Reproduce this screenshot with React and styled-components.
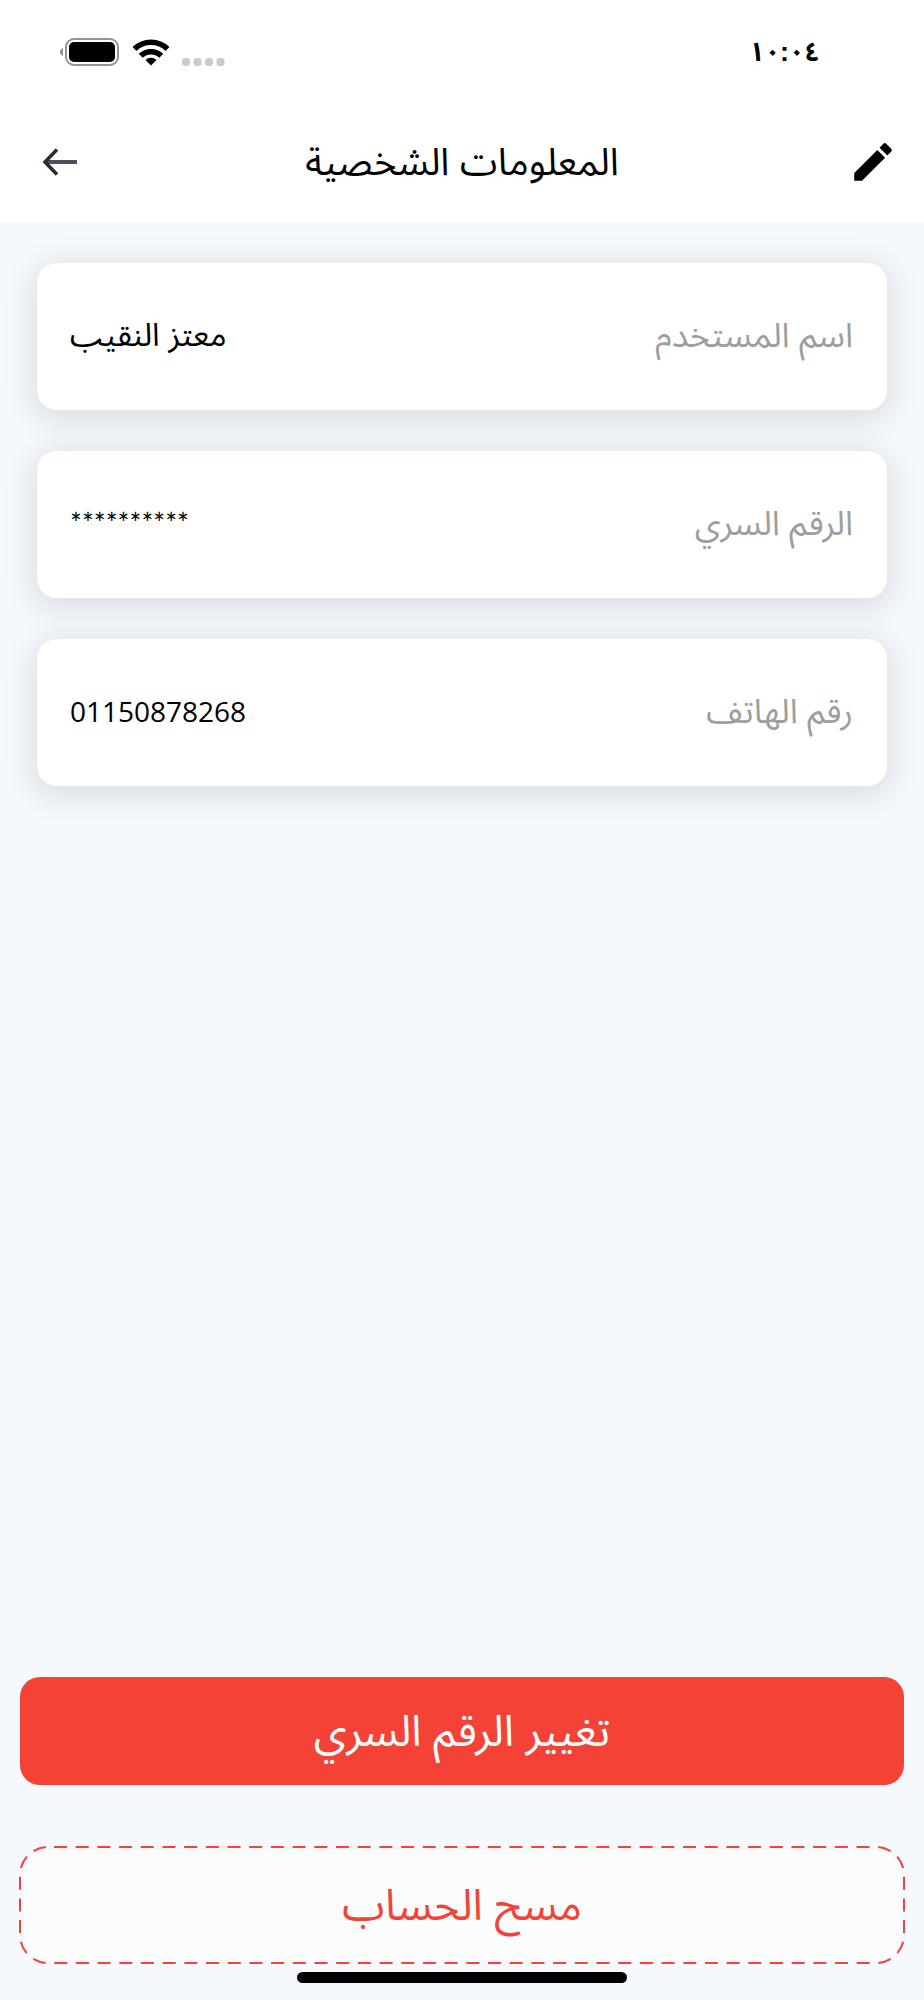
import React from 'react';
import styled, { createGlobalStyle } from 'styled-components';
import { MdEdit } from 'react-icons/md';

const GlobalStyle = createGlobalStyle`
  * {
    box-sizing: border-box;
  }
  body {
    margin: 0;
    background: #f5f8fd;
  }
`;

// start of styled components
const Screen = styled.div`
  display: flex;
  flex-direction: column;
  min-height: 100vh;
  background: #f5f8fd;
  color: #000;
  font-family: 'Liberation Sans', 'Noto Sans Arabic', 'DejaVu Sans', sans-serif;
`;

const Header = styled.header`
  background: #fff;
`;

const StatusBar = styled.div`
  display: flex;
  align-items: center;
  justify-content: space-between;
  height: 104px;
  padding: 0 104px 0 60px;
`;

const Time = styled.time`
  font-size: 27px;
  font-weight: 700;
  line-height: 40px;
`;

const StatusIcons = styled.div`
  display: flex;
  align-items: center;
  gap: 12px;
`;

const AppBar = styled.div`
  display: grid;
  grid-template-columns: 68px 1fr 68px;
  align-items: center;
  height: 118px;
  padding: 0 26px 2px;
`;

const Title = styled.h1`
  margin: 0;
  font-size: 38px;
  font-weight: 400;
  line-height: 48px;
  text-align: center;
`;

const IconButton = styled.button`
  display: flex;
  align-items: center;
  justify-content: ${props => props.$align || 'center'};
  height: 52px;
  padding: 0;
  border: 0;
  background: none;
  color: #000;
  cursor: pointer;
`;

const Main = styled.main`
  display: flex;
  flex: 1;
  flex-direction: column;
  justify-content: space-between;
  padding: 41px 20px 36px;
`;

const InfoList = styled.dl`
  display: flex;
  flex-direction: column;
  gap: 41px;
  margin: 0 17px;
`;

const InfoCard = styled.div`
  display: flex;
  align-items: center;
  justify-content: space-between;
  height: 147px;
  padding: 0 34px 4px 33px;
  border-radius: 20px;
  background: #fff;
  box-shadow: 0 6px 30px 6px rgba(0, 0, 0, 0.1);
`;

const Label = styled.dt`
  color: #9e9e9e;
  font-size: 34px;
  line-height: 40px;
`;

const Value = styled.dd`
  margin: 0;
  font-family: ${props => props.$font || 'inherit'};
  font-size: ${props => (props.$font ? '28px' : '32px')};
  line-height: 40px;
`;

const Actions = styled.div`
  display: flex;
  flex-direction: column;
  gap: 61px;
`;

const Button = styled.button`
  position: relative;
  height: ${props => (props.$outlined ? '118px' : '108px')};
  padding: 4px;
  border: 0;
  border-radius: ${props => (props.$outlined ? '28px' : '20px')};
  background: ${props => (props.$outlined ? '#fbfcfe content-box' : '#f44336')};
  color: ${props => (props.$outlined ? '#f44336' : '#fff')};
  font-family: inherit;
  font-size: 43px;
  line-height: 56px;
  cursor: pointer;
`;

const Dashes = styled.svg`
  position: absolute;
  inset: 0;
  width: 100%;
  height: 100%;
  overflow: visible;

  rect {
    y: 1px;
    width: 100%;
    height: calc(100% - 2px);
    fill: none;
    stroke: #f44336;
    stroke-width: 2;
    stroke-dasharray: 13.01 8.68;
    stroke-dashoffset: -6;
  }
`;

const HomeIndicator = styled.div`
  position: fixed;
  bottom: 17px;
  left: 50%;
  width: 330px;
  height: 11px;
  margin-left: -165px;
  border-radius: 6px;
  background: #000;
`;

// start of icons
const BatteryIcon = () => (
  <svg width="60" height="30" viewBox="0 0 60 30" aria-hidden="true">
    <path d="M3 11v8C1 18.200 0 16.800 0 15s1-3.200 3-4z" fill="#8e8e8e" />
    <rect x="6" y="2" width="52" height="26" rx="8" fill="none" stroke="#949494" strokeWidth="2" />
    <rect x="9" y="5" width="46" height="20" rx="5" />
  </svg>
);

const WifiIcon = () => (
  <svg width="38" height="30" viewBox="0 0 38 30" aria-hidden="true">
    <g fill="none" stroke="#000" strokeWidth="5.500">
      <path d="M2.500 12a23.500 23.500 0 0 1 33 0" />
      <path d="M8.700 18.800a14.800 14.800 0 0 1 20.600 0" />
    </g>
    <path d="M19 28.500l-5.500-5.500a8 8 0 0 1 11 0z" />
  </svg>
);

const SignalIcon = () => (
  <svg width="43" height="30" viewBox="0 0 43 30" fill="#cbcbcb" aria-hidden="true">
    <rect x="0" y="21" width="8" height="8" rx="3" />
    <rect x="11.500" y="21" width="8" height="8" rx="3" />
    <rect x="23" y="21" width="8" height="8" rx="3" />
    <rect x="34.500" y="21" width="8" height="8" rx="3" />
  </svg>
);

const BackIcon = () => (
  <svg width="36" height="28" viewBox="0 0 36 28" fill="none" aria-hidden="true">
    <path d="M5 14h30" stroke="#4d505b" strokeWidth="4" />
    <path d="M15 1.500L3 14l12 12.500" stroke="#252b37" strokeWidth="3.500" />
  </svg>
);

const fields = [
  { label: 'اسم المستخدم', value: 'معتز النقيب' },
  { label: 'الرقم السري', value: '**********', font: 'Lato, sans-serif' },
  { label: 'رقم الهاتف', value: '01150878268', font: "'Open Sans', sans-serif" },
];

const App = () => {
  return (
    <Screen dir="rtl" lang="ar">
      <GlobalStyle />
      <Header>
        <StatusBar>
          <Time>١٠:٠٤</Time>
          <StatusIcons>
            <SignalIcon />
            <WifiIcon />
            <BatteryIcon />
          </StatusIcons>
        </StatusBar>
        <AppBar>
          <IconButton type="button" aria-label="تعديل" $align="flex-start">
            <MdEdit size={50} />
          </IconButton>
          <Title>المعلومات الشخصية</Title>
          <IconButton type="button" aria-label="رجوع">
            <BackIcon />
          </IconButton>
        </AppBar>
      </Header>
      <Main>
        <InfoList>
          {fields.map(field => (
            <InfoCard key={field.label}>
              <Label>{field.label}</Label>
              <Value $font={field.font}>{field.value}</Value>
            </InfoCard>
          ))}
        </InfoList>
        <Actions>
          <Button type="button">تغيير الرقم السري</Button>
          <Button type="button" $outlined>
            <Dashes aria-hidden="true">
              <rect rx="28" />
            </Dashes>
            مسح الحساب
          </Button>
        </Actions>
      </Main>
      <HomeIndicator />
    </Screen>
  );
};

export default App;
